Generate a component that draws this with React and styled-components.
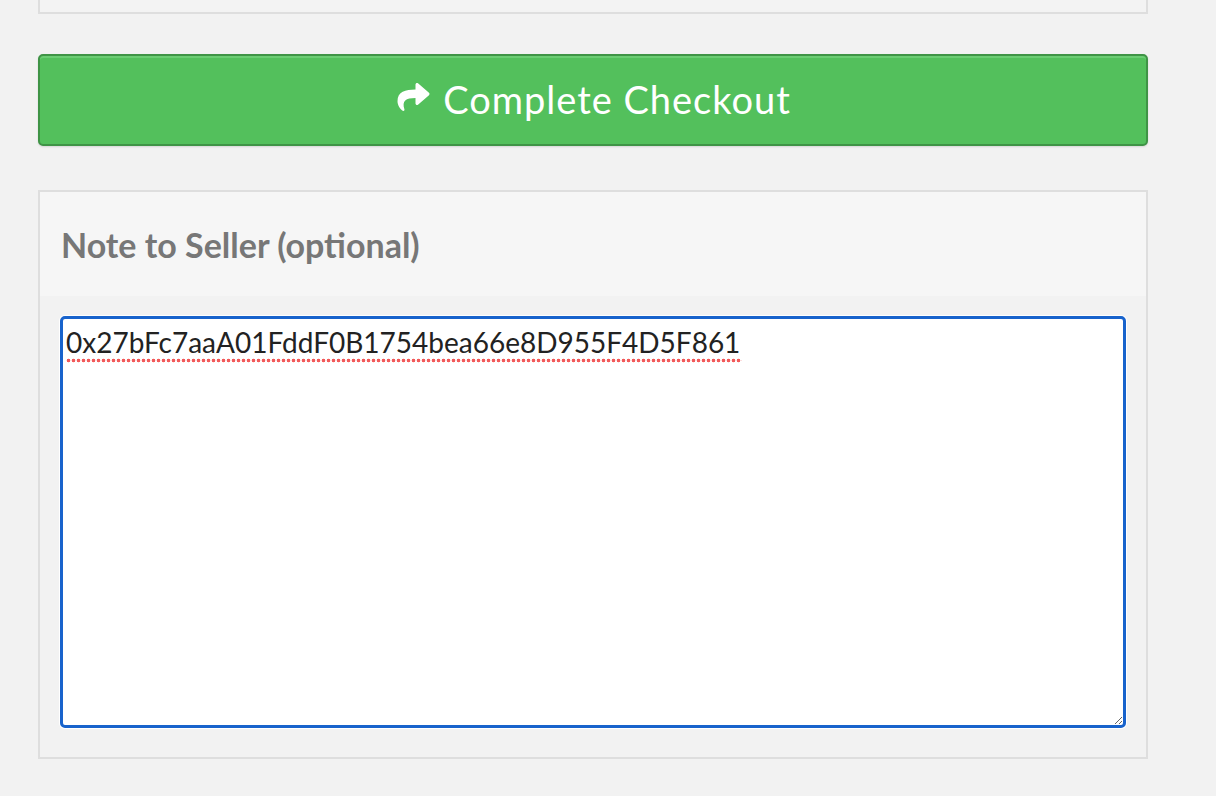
import React from "react";
import styled, { createGlobalStyle } from "styled-components";
import { FaShare } from "react-icons/fa";

const Global = createGlobalStyle`
  html, body { margin: 0; padding: 0; background: #f2f2f2; }
  body { font-family: Lato, "Open Sans", sans-serif; }
  * { box-sizing: border-box; }
`;

const Page = styled.div`
  width: 1110px;
  margin-left: 38px;
  display: flex;
  flex-direction: column;
`;

const TopPanel = styled.div`
  height: 14px;
  border: 2px solid #dedede;
  border-top: none;
  background: #f3f3f3;
`;

const CheckoutButton = styled.button`
  margin-top: 40px;
  height: 92px;
  width: 100%;
  display: flex;
  align-items: center;
  justify-content: center;
  gap: 11px;
  background: #53c05c;
  border: 2px solid #3f9446;
  border-radius: 5px;
  box-shadow: inset 0 2px 0 #6bcd73, 0 1px 2px rgba(0, 0, 0, 0.12);
  color: #fff;
  font-family: Lato, sans-serif;
  font-size: 38px;
  letter-spacing: 1px;
  cursor: pointer;
  padding: 0 0 2px;
  svg {
    width: 37px;
    height: 32px;
    margin-top: -5px;
  }
`;

const NotePanel = styled.section`
  margin-top: 44px;
  border: 2px solid #dedede;
  background: #f2f2f2;
`;

const NoteHeader = styled.header`
  height: 104px;
  background: #f6f6f6;
  display: flex;
  align-items: center;
  padding: 0 0 0 21px;
`;

const NoteTitle = styled.h3`
  margin: 0;
  font-family: Lato, sans-serif;
  font-weight: 700;
  font-size: 34px;
  color: #777;
`;

const NoteBody = styled.div`
  padding: 20px 20px 29px 20px;
  display: flex;
  position: relative;
`;

const NoteArea = styled.textarea`
  width: 100%;
  height: 412px;
  resize: vertical;
  border: 3px solid #1863cc;
  border-radius: 5px;
  box-shadow: 0 0 0 1px #fff;
  background: #fff;
  outline: none;
  padding: 6px 3px;
  font-family: Lato, sans-serif;
  font-size: 28px;
  line-height: 1.25;
  color: #222;
`;

const SpellMark = styled.span`
  position: absolute;
  left: 26px;
  top: 62px;
  width: 676px;
  height: 5px;
  pointer-events: none;
  background: radial-gradient(circle, #f25a5a 1.6px, transparent 2.1px) 0 0 / 5px 5px repeat-x;
`;

export default function App() {
  return (
    <>
      <Global />
      <Page>
        <TopPanel />
        <CheckoutButton>
          <FaShare />
          Complete Checkout
        </CheckoutButton>
        <NotePanel>
          <NoteHeader>
            <NoteTitle>Note to Seller (optional)</NoteTitle>
          </NoteHeader>
          <NoteBody>
            <NoteArea
              spellCheck={false}
              defaultValue="0x27bFc7aaA01FddF0B1754bea66e8D955F4D5F861"
            />
            <SpellMark />
          </NoteBody>
        </NotePanel>
      </Page>
    </>
  );
}
